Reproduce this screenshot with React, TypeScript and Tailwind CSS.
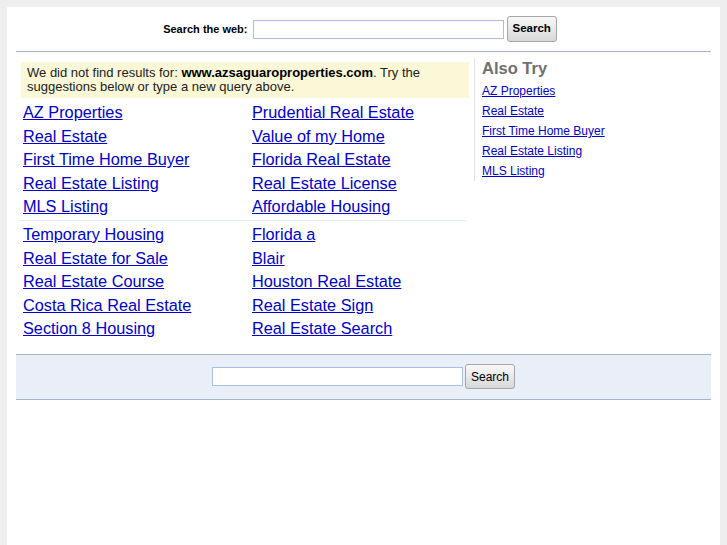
const group1 = [
  ['AZ Properties', 'Prudential Real Estate'],
  ['Real Estate', 'Value of my Home'],
  ['First Time Home Buyer', 'Florida Real Estate'],
  ['Real Estate Listing', 'Real Estate License'],
  ['MLS Listing', 'Affordable Housing'],
];

const group2 = [
  ['Temporary Housing', 'Florida a'],
  ['Real Estate for Sale', 'Blair'],
  ['Real Estate Course', 'Houston Real Estate'],
  ['Costa Rica Real Estate', 'Real Estate Sign'],
  ['Section 8 Housing', 'Real Estate Search'],
];

const alsoTry = ['AZ Properties', 'Real Estate', 'First Time Home Buyer', 'Real Estate Listing', 'MLS Listing'];

function LinkGrid({ rows }: { rows: string[][] }) {
  return (
    <div className="grid grid-cols-[229px_1fr] pl-[2px]">
      {rows.flat().map((label) => (
        <a key={label} href="#" className="h-[23.6px] text-[16.3px] leading-[23.6px] text-[#0000cc] underline">
          {label}
        </a>
      ))}
    </div>
  );
}

function SearchButton({ bold }: { bold?: boolean }) {
  return (
    <button
      className={`rounded-[3px] border border-[#a6a6a6] bg-gradient-to-b from-[#f8f8f8] to-[#d8d8d8] px-[5px] text-black ${
        bold ? 'h-[26px] text-[11.5px] font-bold' : 'h-[25px] text-[12px]'
      }`}
    >
      Search
    </button>
  );
}

export default function App() {
  return (
    <div className="min-h-screen bg-[#eeeeee] px-[7px] pt-[7px] font-['Liberation_Sans',Arial,sans-serif]">
      <div className="min-h-[538px] bg-white px-[9px]">
        <div className="flex h-[45px] items-center justify-center border-b border-[#9fb2c9] pr-[7px]">
          <span className="mr-[5px] text-[11px] font-bold text-black">Search the web:</span>
          <input className="mr-[3px] h-[19px] w-[251px] border border-[#a9c1de] bg-white" />
          <SearchButton bold />
        </div>

        <div className="flex">
          <div className="ml-[5px] mt-[10px] w-[448px]">
            <div className="h-[36px] bg-[#faf8d7] px-[6px] py-[4px] text-[13px] leading-[14px] text-[#222]">
              We did not find results for: <b className="text-black">www.azsaguaroproperties.com</b>. Try the
              suggestions below or type a new query above.
            </div>
            <div className="mt-[3px]">
              <LinkGrid rows={group1} />
            </div>
            <div className="mb-[2px] ml-[-3px] mr-[2px] mt-[1px] border-t border-[#e6ecf8]" />
            <LinkGrid rows={group2} />
          </div>

          <div className="ml-[5px] mt-[6px] self-start border-l border-[#e2e2e2] pl-[7px]">
            <div className="h-[20px] text-[16.5px] font-bold leading-[20px] text-[#6f6f6f]">Also Try</div>
            <div className="mt-[3px] flex flex-col">
              {alsoTry.map((label) => (
                <a key={label} href="#" className="h-[20px] text-[12px] leading-[20px] text-[#0000cc] underline">
                  {label}
                </a>
              ))}
            </div>
          </div>
        </div>

        <div className="mt-[13px] flex h-[46px] items-center justify-center border-y border-[#a3b5cc] bg-[#e9eef9]">
          <input className="mr-[2px] h-[19px] w-[251px] border border-[#a9c1de] bg-white" />
          <SearchButton />
        </div>
      </div>
    </div>
  );
}
